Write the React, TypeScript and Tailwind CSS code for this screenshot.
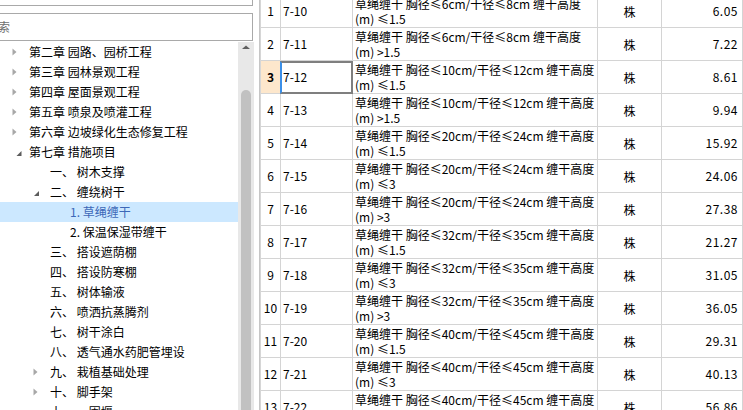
import React from "react";

type Arrow = "c" | "e" | null;
interface TreeItem {
  level: number;
  arrow: Arrow;
  text: string;
  selected?: boolean;
}

const tree: TreeItem[] = [
  { level: 0, arrow: "c", text: "第二章 园路、园桥工程" },
  { level: 0, arrow: "c", text: "第三章 园林景观工程" },
  { level: 0, arrow: "c", text: "第四章 屋面景观工程" },
  { level: 0, arrow: "c", text: "第五章 喷泉及喷灌工程" },
  { level: 0, arrow: "c", text: "第六章 边坡绿化生态修复工程" },
  { level: 0, arrow: "e", text: "第七章 措施项目" },
  { level: 1, arrow: null, text: "一、 树木支撑" },
  { level: 1, arrow: "e", text: "二、 缠绕树干" },
  { level: 2, arrow: null, text: "1. 草绳缠干", selected: true },
  { level: 2, arrow: null, text: "2. 保温保湿带缠干" },
  { level: 1, arrow: null, text: "三、 搭设遮荫棚" },
  { level: 1, arrow: null, text: "四、 搭设防寒棚" },
  { level: 1, arrow: null, text: "五、 树体输液" },
  { level: 1, arrow: null, text: "六、 喷洒抗蒸腾剂" },
  { level: 1, arrow: null, text: "七、 树干涂白" },
  { level: 1, arrow: null, text: "八、 透气通水药肥管埋设" },
  { level: 1, arrow: "c", text: "九、 栽植基础处理" },
  { level: 1, arrow: "c", text: "十、 脚手架" },
  { level: 1, arrow: null, text: "十一、 围堰" },
];

interface Row {
  no: number;
  code: string;
  a: string;
  b: string;
  h: string;
  price: string;
}

const rows: Row[] = [
  { no: 1, code: "7-10", a: "6", b: "8", h: "≤1.5", price: "6.05" },
  { no: 2, code: "7-11", a: "6", b: "8", h: ">1.5", price: "7.22" },
  { no: 3, code: "7-12", a: "10", b: "12", h: "≤1.5", price: "8.61" },
  { no: 4, code: "7-13", a: "10", b: "12", h: ">1.5", price: "9.94" },
  { no: 5, code: "7-14", a: "20", b: "24", h: "≤1.5", price: "15.92" },
  { no: 6, code: "7-15", a: "20", b: "24", h: "≤3", price: "24.06" },
  { no: 7, code: "7-16", a: "20", b: "24", h: ">3", price: "27.38" },
  { no: 8, code: "7-17", a: "32", b: "35", h: "≤1.5", price: "21.27" },
  { no: 9, code: "7-18", a: "32", b: "35", h: "≤3", price: "31.05" },
  { no: 10, code: "7-19", a: "32", b: "35", h: ">3", price: "36.05" },
  { no: 11, code: "7-20", a: "40", b: "45", h: "≤1.5", price: "29.31" },
  { no: 12, code: "7-21", a: "40", b: "45", h: "≤3", price: "40.13" },
  { no: 13, code: "7-22", a: "40", b: "45", h: ">3", price: "56.86" },
];

function ArrowIcon({ kind, level }: { kind: Arrow; level: number }) {
  if (!kind) return <span className="w-[16px] shrink-0" />;
  return (
    <svg width="16" height="20" viewBox="0 0 16 20" className="shrink-0">
      {kind === "c" ? (
        <path d="M3.5 6.5 L7.5 10 L3.5 13.5 Z" fill="#a8a8a8" />
      ) : level === 0 ? (
        <path d="M12.5 9 L12.5 14 L7.5 14 Z" fill="#5c5c5c" />
      ) : (
        <path d="M9 9 L9 14 L4 14 Z" fill="#5c5c5c" />
      )}
    </svg>
  );
}

const padByLevel = ["pl-[9px]", "pl-[30px]", "pl-[50px]"];

export default function App() {
  return (
    <div
      className="flex h-[410px] w-[743px] overflow-hidden bg-white text-[12px] text-black"
      style={{ fontFamily: '"Noto Sans CJK SC", "Noto Sans", sans-serif' }}
    >
      {/* Left panel */}
      <div className="flex w-[260px] shrink-0 flex-col border-r border-[#c6c6c6] bg-white">
        <div className="h-[6px] w-[253px] border-b border-r border-[#a9a9a9]" />
        <div className="mt-[7px] flex h-[28px] w-[253px] items-center overflow-hidden border-y border-r border-[#a9a9a9]">
          <span className="-ml-[14px] whitespace-nowrap text-[#6e6e6e]">搜索</span>
        </div>
        <div className="mt-px flex min-h-0 flex-1">
          <div className="w-[238px] shrink-0">
            {tree.map((t, i) => (
              <div
                key={i}
                className={`flex h-[20px] items-center whitespace-nowrap leading-[20px] ${padByLevel[t.level]} ${
                  t.selected ? "bg-[#cce8ff] text-[#3d68b8]" : ""
                }`}
              >
                <ArrowIcon kind={t.arrow} level={t.level} />
                <span className="ml-[4px]">{t.text}</span>
              </div>
            ))}
          </div>
          <div className="flex w-[16px] shrink-0 flex-col items-center bg-[#e8e8e8]">
            <svg width="16" height="10" viewBox="0 0 16 10" className="mt-[1px]">
              <path d="M4 6 L8 2.5 L12 6 Z" fill="#606060" />
            </svg>
            <div className="mt-[37px] w-[10px] flex-1 rounded-t-full bg-[#c1c1c1]" />
          </div>
        </div>
      </div>

      {/* Table */}
      <div className="flex-1 border-l border-[#d6d6d6]">
        <div className="-mt-[5px]">
          {rows.map((r) => {
            const sel = r.no === 3;
            return (
              <div key={r.no} className="flex h-[33px] border-b border-[#d4d4d4]">
                <div
                  className={`flex w-[20px] shrink-0 items-center justify-center border-r border-[#d4d4d4] ${
                    sel ? "bg-[#fde7cc] font-bold" : ""
                  }`}
                >
                  {r.no}
                </div>
                <div className="relative flex w-[72px] shrink-0 items-center border-r border-[#d4d4d4] pl-[2px]">
                  {r.code}
                  {sel && (
                    <div className="pointer-events-none absolute -left-px top-0 -right-px -bottom-px border-2 border-[#7f7f7f] border-l-[#3b8fe8]" />
                  )}
                </div>
                <div className="w-[245px] shrink-0 overflow-hidden border-r border-[#d4d4d4] pl-[2px] pt-px leading-[15px]">
                  <div className="whitespace-nowrap">
                    草绳缠干 胸径≤{r.a}cm/干径≤{r.b}cm 缠干高度
                  </div>
                  <div className="whitespace-nowrap">(m) {r.h}</div>
                </div>
                <div className="flex w-[64px] shrink-0 items-center justify-center border-r border-[#d4d4d4] pt-[2px]">
                  株
                </div>
                <div className="flex w-[81px] shrink-0 items-center justify-end border-r border-[#d4d4d4] pr-[4px] tracking-[0.5px]">
                  {r.price}
                </div>
              </div>
            );
          })}
        </div>
      </div>
    </div>
  );
}
